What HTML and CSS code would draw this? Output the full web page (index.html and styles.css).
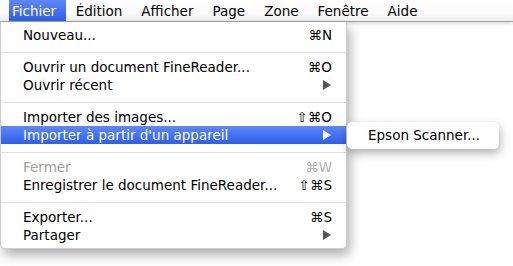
FILE: index.html
```html
<!DOCTYPE html>
<html lang="fr">
<head>
<meta charset="utf-8">
<link rel="stylesheet" href="styles.css">
</head>
<body>
<div class="menubar">
  <span class="top active">Fichier</span>
  <span class="top">Édition</span>
  <span class="top">Afficher</span>
  <span class="top">Page</span>
  <span class="top">Zone</span>
  <span class="top">Fenêtre</span>
  <span class="top">Aide</span>
</div>
<div class="stage">
  <div class="menu">
    <div class="item"><span class="label">Nouveau...</span><span class="key">⌘N</span></div>
    <div class="sep"></div>
    <div class="item"><span class="label">Ouvrir un document FineReader...</span><span class="key">⌘O</span></div>
    <div class="item"><span class="label">Ouvrir récent</span><span class="arrow"></span></div>
    <div class="sep"></div>
    <div class="item"><span class="label">Importer des images...</span><span class="key">⇧⌘O</span></div>
    <div class="item selected"><span class="label">Importer à partir d'un appareil</span><span class="arrow"></span></div>
    <div class="sep"></div>
    <div class="item disabled"><span class="label">Fermer</span><span class="key">⌘W</span></div>
    <div class="item"><span class="label">Enregistrer le document FineReader...</span><span class="key">⇧⌘S</span></div>
    <div class="sep"></div>
    <div class="item"><span class="label">Exporter...</span><span class="key">⌘S</span></div>
    <div class="item"><span class="label">Partager</span><span class="arrow"></span></div>
  </div>
  <div class="submenu">
    <div class="item"><span class="label">Epson Scanner...</span></div>
  </div>
</div>
</body>
</html>
```
FILE: styles.css
```css
html, body {
  margin: 0;
  padding: 0;
  background: #ffffff;
}
body {
  font-family: "DejaVu Sans", "Liberation Sans", sans-serif;
  font-size: 13.5px;
  color: #000;
  width: 513px;
  height: 266px;
  overflow: hidden;
}
.menubar {
  display: flex;
  height: 21px;
  padding-left: 9px;
  background: linear-gradient(#ffffff 0%, #fbfbfb 60%, #efefef 100%);
  border-bottom: 1px solid #a4a4a4;
  box-shadow: 0 1px 4px rgba(0,0,0,0.2);
  position: relative;
  z-index: 1;
}
.top {
  display: flex;
  align-items: center;
  padding: 1px 9.5px 0;
}
.top.active {
  background: linear-gradient(#5e88f5, #2b5ff0);
  color: #fff;
  padding: 1px 10px 0 3px;
}
.stage {
  display: flex;
  align-items: flex-start;
}
.menu {
  width: 345px;
  padding: 4px 0 4px;
  background: #fff;
  border: 1px solid #cdcdcd;
  border-top: none;
  border-radius: 0 0 5px 5px;
  box-shadow: 3px 6px 12px rgba(0,0,0,0.32);
  position: relative;
  z-index: 2;
}
.item {
  display: flex;
  align-items: center;
  justify-content: space-between;
  height: 18px;
  padding: 0 14px 0 22px;
}
.item.selected {
  background: linear-gradient(#5e88f5, #2b5ff0);
  color: #fff;
}
.item.disabled {
  color: #a0a0a0;
}
.item.disabled .key {
  color: #b4b4b4;
}
.arrow {
  width: 0;
  height: 0;
  border-left: 8px solid #555555;
  border-top: 5px solid transparent;
  border-bottom: 5px solid transparent;
  margin-right: 1px;
}
.selected .arrow {
  border-left-color: #ffffff;
}
.sep {
  height: 1px;
  background: #e1e1e1;
  margin: 8px 0 5px;
}
.submenu {
  margin-top: 100px;
  width: 152px;
  padding: 4px 0 5px;
  background: #fff;
  border-radius: 5px;
  box-shadow: 1px 4px 10px rgba(0,0,0,0.32);
  position: relative;
  z-index: 3;
}
.submenu .item {
  padding: 0 14px 0 21px;
}
```
